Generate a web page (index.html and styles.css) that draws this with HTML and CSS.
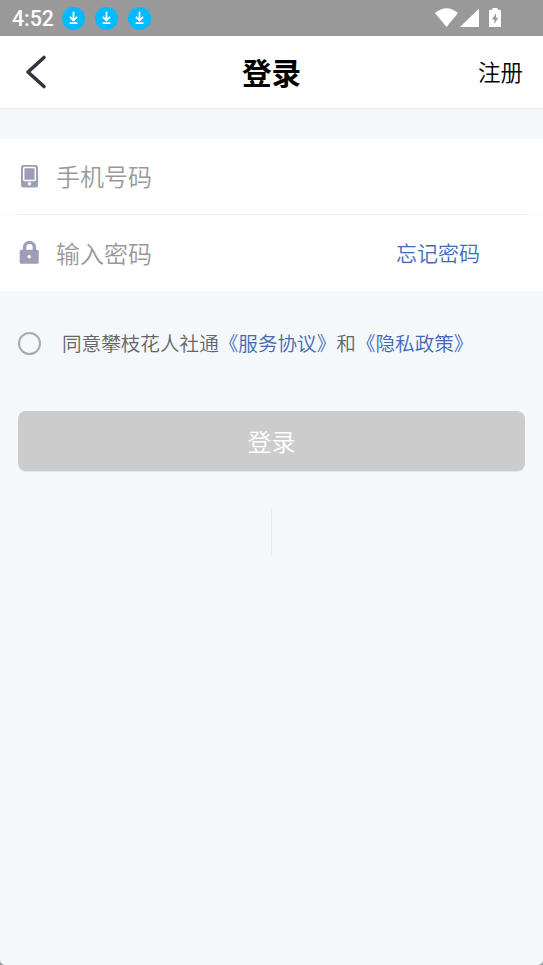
FILE: index.html
```html
<!DOCTYPE html>
<html lang="zh-CN">
<head>
<meta charset="utf-8">
<title>登录</title>
<link rel="stylesheet" href="styles.css">
</head>
<body>
<div class="screen">
  <div class="status-bar">
    <span class="clock">4:52</span>
    <div class="notices">
      <svg class="notice" viewBox="0 0 23 23"><circle cx="11.5" cy="11.5" r="11.5"/><path d="M11.5 4.8v8.4M7.9 9.8l3.6 3.6 3.6-3.6M7.6 16.2h7.8"/></svg>
      <svg class="notice" viewBox="0 0 23 23"><circle cx="11.5" cy="11.5" r="11.5"/><path d="M11.5 4.8v8.4M7.9 9.8l3.6 3.6 3.6-3.6M7.6 16.2h7.8"/></svg>
      <svg class="notice" viewBox="0 0 23 23"><circle cx="11.5" cy="11.5" r="11.5"/><path d="M11.5 4.8v8.4M7.9 9.8l3.6 3.6 3.6-3.6M7.6 16.2h7.8"/></svg>
    </div>
    <svg class="signals" viewBox="0 0 68 20">
      <path d="M0 4Q11.500-5.600 23 4L11.500 18z"/>
      <path d="M44-.5v18.500H25z"/>
      <path fill-rule="evenodd" d="M57.500-1h5v1.700h2.300q1.200 0 1.200 1.200v15q0 1.200-1.200 1.200h-9.600q-1.200 0-1.200-1.200v-15q0-1.200 1.200-1.200h2.300zM61 4.200l-4 6.200h2.400v4.600l3.800-6.200h-2.200z"/>
    </svg>
  </div>
  <header class="nav">
    <svg class="back" viewBox="0 0 24 36"><path d="M19 3.500L3 18l16 14.500"/></svg>
    <h1 class="title">登录</h1>
    <a class="register">注册</a>
  </header>
  <main>
    <section class="fields">
      <label class="field">
        <svg class="icon" viewBox="0 0 22 24"><rect x="2" y="1" width="17" height="22.500" rx="2.500"/><rect class="outline" x="4.700" y="3.500" width="11.600" height="13" rx="1"/><circle class="hole" cx="10.500" cy="19.700" r="1.700"/></svg>
        <span class="placeholder">手机号码</span>
      </label>
      <label class="field">
        <svg class="icon" viewBox="0 0 22 24"><path class="shackle" d="M5.600 11V7.300a4.900 4.900 0 0 1 9.800 0V11"/><rect x=".7" y="9.700" width="19" height="14" rx="1.500"/><circle class="hole" cx="10.200" cy="16.700" r="1.700"/></svg>
        <span class="placeholder">输入密码</span>
        <a class="forgot">忘记密码</a>
      </label>
    </section>
    <div class="agreement">
      <span class="radio"></span>
      <p class="terms">同意攀枝花人社通<a>《服务协议》</a>和<a>《隐私政策》</a></p>
    </div>
    <button class="submit">登录</button>
    <div class="separator"></div>
  </main>
</div>
</body>
</html>
```
FILE: styles.css
```css
* {
  box-sizing: border-box;
}

body {
  margin: 0;
  background: #999;
  font-family: "Noto Sans CJK SC", sans-serif;
  font-weight: 350;
}

.screen {
  height: 965px;
  overflow: hidden;
  background: #f4f8fb;
  border-radius: 0 0 5px 5px;
}

.status-bar {
  display: flex;
  align-items: center;
  height: 36px;
  padding: 0 40px 0 12px;
  background: #999;
}

.clock {
  width: 50px;
  color: #fff;
  font: 500 21.300px/36px Roboto, sans-serif;
  padding-top: 2px;
}

.notices {
  display: flex;
  gap: 10px;
}

.notice {
  width: 23px;
  height: 23px;
  margin-top: 1px;
  fill: #0bf;
}

.notice path {
  fill: none;
  stroke: #fff;
  stroke-width: 1.8;
}

.signals {
  width: 68px;
  height: 20px;
  margin: 1px 0 0 auto;
  overflow: visible;
  fill: #fff;
}

.nav {
  display: grid;
  grid-template-columns: 1fr auto 1fr;
  align-items: center;
  height: 73px;
  padding: 0 20px 0 25px;
  background: #fff;
  border-bottom: 1px solid #e8eaec;
}

.back {
  width: 24px;
  height: 36px;
  fill: none;
  stroke: #343440;
  stroke-width: 3.6;
  stroke-linecap: round;
  stroke-linejoin: round;
}

.title {
  margin: 0 5px 0 0;
  padding-bottom: 2px;
  font-size: 29.500px;
  font-weight: 700;
  line-height: 70px;
  color: #000;
}

.register {
  justify-self: end;
  padding-bottom: 2px;
  font-size: 22.500px;
  color: #000;
}

.fields {
  margin-top: 30px;
  background: #fff;
}

.field {
  display: flex;
  align-items: center;
  height: 76px;
  padding: 0 63px 2px 19px;
}

.field:first-child {
  background: linear-gradient(#ececee, #ececee) center bottom / 507px 1px no-repeat,
    linear-gradient(#f4f8fb, #f4f8fb) left bottom / 100% 1px no-repeat;
}

.icon {
  width: 22px;
  height: 24px;
  fill: #9c9eb6;
}

.outline {
  stroke: #fff;
  stroke-width: 1.5;
}

.hole {
  fill: #fff;
}

.shackle {
  fill: none;
  stroke: #9c9eb6;
  stroke-width: 3.4;
}

.placeholder {
  margin-left: 15px;
  font-size: 24px;
  color: #999;
}

.field:first-child .placeholder {
  padding-bottom: 1px;
}

.forgot {
  margin-left: auto;
  font-size: 21px;
  color: #4169b8;
}

.agreement {
  display: flex;
  align-items: center;
  height: 104px;
  padding-left: 18px;
}

.radio {
  width: 23px;
  height: 23px;
  border: 2px solid #aaa;
  border-radius: 50%;
}

.terms {
  margin: 0 0 0 21px;
  padding-bottom: 1px;
  font-size: 19.600px;
  color: #666;
  white-space: nowrap;
}

.terms a {
  color: #4169b8;
}

.submit {
  display: block;
  width: 507px;
  height: 60px;
  margin: 16px auto 0;
  padding: 0 0 2px;
  border: 0;
  border-radius: 8px;
  background: #ccc;
  box-shadow: 0 1px 0 #e4e6e8;
  color: #fff;
  font: 350 24px "Noto Sans CJK SC", sans-serif;
}

.separator {
  width: 1px;
  height: 46px;
  margin: 38px auto 0;
  background: #e7ebee;
}
```
